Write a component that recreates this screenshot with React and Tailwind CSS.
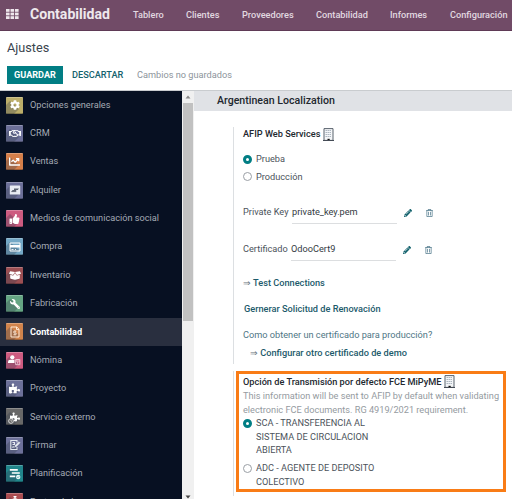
import React from "react";
import {
  FaCog, FaRegHandshake, FaChartLine, FaThumbsUp, FaWrench, FaBoxOpen,
  FaPuzzlePiece, FaPencilAlt, FaRegTrashAlt,
} from "react-icons/fa";

const Card = () => (
  <svg viewBox="0 0 12 12" className="h-3 w-3">
    <path d="M1 2h10v8H1z" fill="none" stroke="#fff" strokeWidth="1" />
    <path d="M1 4h10v2.6H1z" fill="#fff" />
    <path d="M2.5 8.5h2M6 8.5h1" stroke="#fff" strokeWidth=".9" />
  </svg>
);
const Rent = () => (
  <svg viewBox="0 0 12 12" className="h-3 w-3">
    <rect x=".8" y="1.5" width="10.4" height="9" rx=".6" fill="#e8ecf2" />
    <path d="M5 4.6h5L8.8 6H5zM2.4 7.8 3.6 6h3.6v1.6z" fill="#5b6270" />
    <path d="M2.4 7.6h4.8" stroke="#5b6270" strokeWidth=".8" />
  </svg>
);
const Invoice = () => (
  <svg viewBox="0 0 12 12" className="h-3 w-3" fill="none" stroke="#ffe9d3" strokeWidth="1">
    <path d="M2 1h5.8L10 3.2V11H2zM7.5 1v2.6H10" />
    <path d="M7.4 5.2H5.3q-.8 0-.8.9t.8.9h1.3q.8 0 .8.8t-.8.9H4.4M6 4.4v5" strokeWidth=".8" />
  </svg>
);
const Payroll = () => (
  <svg viewBox="0 0 13 12" className="h-3 w-[13px]">
    <circle cx="4.3" cy="3.3" r="2.1" fill="#fff" />
    <path d="M0 9V8q0-2.2 2.2-2.2h4.3V9z" fill="#fff" />
    <path d="M7.7 5.5h4.1v5.2H7.7zM7.7 7h4.1M9.7 7.8v2" fill="none" stroke="#f5cfdc" strokeWidth=".9" />
  </svg>
);
const Field = () => (
  <span className="relative flex">
    <FaPuzzlePiece className="ml-px h-[10px] w-[10px] text-white" />
    <svg viewBox="0 0 6 6" className="absolute -left-px top-[6px] h-[6px] w-[6px]">
      <circle cx="3" cy="3" r="2.4" fill="#686868" stroke="#eee" strokeWidth=".8" />
      <path d="M3 1.8V3l1 .5" fill="none" stroke="#eee" strokeWidth=".6" />
    </svg>
  </span>
);
const Sign = () => (
  <svg viewBox="0 0 12 12" className="h-3 w-3" fill="none" stroke="#e6eaf0" strokeWidth="1.1">
    <path d="M8 8v2.5H1.8v-9H8v2M3.5 3.5h2v2h-2M3.3 8.5q1-1.5 2 0" />
    <path d="m5.8 8 .6-1.7L10 2.8l1 1-3.5 3.6z" fill="#e6eaf0" strokeWidth=".5" />
  </svg>
);
const Plan = () => (
  <svg viewBox="0 0 12 12" className="h-3 w-3">
    <path d="M.8 1.8h8M2.8 5h8M.8 8.3h5.5" stroke="#fff" strokeWidth="1.7" />
    <circle cx="9.2" cy="9" r="2.2" fill="#e8f8f8" />
    <path d="m8.2 9 .8.8 1.3-1.5" fill="none" stroke="#21858b" strokeWidth=".6" />
  </svg>
);
const Stopwatch = () => (
  <svg viewBox="0 0 12 12" className="h-3 w-3">
    <path d="M4.5 0h3v1.2h-.8v1.2H5.3V1.2h-.8z" fill="#fff" />
    <circle cx="6" cy="6.8" r="4.6" fill="#fff" />
    <path d="M6 4v3.2" stroke="#a94c50" strokeWidth="1" />
  </svg>
);

const apps = [
  ["Opciones generales", "bg-[#bcae6a]", <FaCog className="h-[10px] w-[10px]" />],
  ["CRM", "bg-[#6c7099]", <FaRegHandshake className="h-[11px] w-[12px]" />],
  ["Ventas", "bg-[#d57f4a]", <FaChartLine className="h-[11px] w-[11px]" />],
  ["Alquiler", "bg-[#6c7099]", <Rent />],
  ["Medios de comunicación social", "bg-[#cd5b80]", <FaThumbsUp className="h-[10px] w-[11px]" />],
  ["Compra", "bg-[#74a8c6]", <Card />],
  ["Inventario", "bg-[#9c4f53]", <FaBoxOpen className="h-[11px] w-[12px]" />],
  ["Fabricación", "bg-[#65a583]", <FaWrench className="h-[10px] w-[10px] -scale-x-100" />],
  ["Contabilidad", "bg-[#d1844c]", <Invoice />],
  ["Nómina", "bg-[#cd5b80]", <Payroll />],
  ["Proyecto", "bg-[#6c7099]", <FaPuzzlePiece className="h-[11px] w-[11px]" />],
  ["Servicio externo", "bg-[#686868]", <Field />],
  ["Firmar", "bg-[#6c7099]", <Sign />],
  ["Planificación", "bg-[#21858b]", <Plan />],
  ["Partes de horas", "bg-[#a94c50]", <Stopwatch />],
];

function AppIcon({ color, children }) {
  return (
    <span className={`relative flex h-[17px] w-[17px] shrink-0 items-center justify-center overflow-hidden rounded-[1px] text-white ${color}`}>
      <svg viewBox="0 0 17 17" className="absolute inset-0 h-full w-full">
        <path d="M0 8 4 4l9 8-5 5H0z" fill="#303848" fillOpacity=".3" />
        <path d="M0 .5h17" stroke="#fff" strokeOpacity=".25" />
        <path d="M0 16.5h17" stroke="#000" strokeOpacity=".25" />
      </svg>
      <span className="relative flex">{children}</span>
    </span>
  );
}

function Building() {
  return (
    <svg viewBox="0 0 11 13" className="h-[13px] w-[11px] shrink-0">
      <path d="M1 .6h9v11.8H1z" fill="#f4f6f8" stroke="#59626d" strokeWidth="1" />
      <path d="M2.6 2.5h6M2.6 4.5h6M2.6 6.5h6M2.6 8.5h6" stroke="#9ba6b2" strokeWidth="1" strokeDasharray="1.2 .8" />
      <path d="M4.5 10.8h2.2v1.7H4.5z" fill="#111" />
      <path d="M0 12.5h11" stroke="#444b55" />
    </svg>
  );
}

function Radio({ checked }) {
  return checked ? (
    <span className="h-[9px] w-[9px] shrink-0 rounded-full border-[3px] border-[#017e84] bg-white" />
  ) : (
    <span className="h-[9px] w-[9px] shrink-0 rounded-full border border-[#9a9fa5] bg-white" />
  );
}

function FileRow({ label, value, gap }) {
  return (
    <div className="flex h-[22px] items-start leading-[19px] text-[#4c535b]">
      <span className={`whitespace-nowrap ${gap}`}>{label}</span>
      <span className="h-[22px] w-[105px] border-b border-[#dcdee0] text-[#343a42]">{value}</span>
      <FaPencilAlt className="ml-[7px] mt-[7px] h-2 w-2 text-[#10606b]" />
      <FaRegTrashAlt className="ml-[14px] mt-[7px] h-2 w-[7px] text-[#567e90]" />
    </div>
  );
}

export default function App() {
  return (
    <div className="flex h-[499px] w-[512px] flex-col overflow-hidden bg-white font-['Roboto',sans-serif]">
      <header className="flex h-[31px] shrink-0 items-center whitespace-nowrap border-b border-[#5f3a56] bg-[#714b67] text-[9.2px] font-medium text-[#e2d9e0]">
        <svg viewBox="0 0 13 10" className="ml-[6px] mt-[-2px] h-[10px] w-[13px] shrink-0" fill="#eee6ec">
          {[0, 3.6, 7.2].map((y) => [0, 4.5, 9].map((x) => <rect key={x + "-" + y} x={x} y={y} width="3.6" height="2.8" />))}
        </svg>
        <div className="mt-[-1px] ml-[11px] w-[103px] text-[14.1px] font-bold text-[#eee8ed]">Contabilidad</div>
        <div className="mt-[-1px] w-[53px]">Tablero</div>
        <div className="mt-[-1px] w-[56px]">Clientes</div>
        <div className="mt-[-1px] w-[74px]">Proveedores</div>
        <div className="mt-[-1px] w-[74px]">Contabilidad</div>
        <div className="mt-[-1px] w-[60px]">Informes</div>
        <div className="mt-[-1px]">Configuración</div>
      </header>

      <div className="flex h-[60px] shrink-0 flex-col border-b border-[#c9cccf] pl-[7px]">
        <div className="h-[35px] pt-[7px] text-[12.7px] leading-[20px] text-[#3b444e]">Ajustes</div>
        <div className="flex h-[18px] items-center whitespace-nowrap text-[9.2px] font-medium">
          <button className="h-[18px] w-[56px] bg-[#017e84] text-[9.1px] font-bold leading-[18px] text-white">GUARDAR</button>
          <button className="ml-[9px] w-[65px] text-left text-[#15626e]">DESCARTAR</button>
          <span className="font-normal text-[#8d949b]">Cambios no guardados</span>
        </div>
      </div>

      <div className="flex min-h-0 flex-1">
        <nav className="w-[182px] shrink-0 overflow-hidden bg-[#071022]">
          {apps.map(([name, color, icon]) => (
            <div
              key={name}
              className={`flex h-[28.35px] items-center whitespace-nowrap pl-[6px] text-[9.2px] ${
                name === "Contabilidad" ? "bg-[#292f3f] font-bold text-white" : "text-[#a4aab4]"
              }`}
            >
              <AppIcon color={color}>{icon}</AppIcon>
              <span className="ml-[7px] pb-px">{name}</span>
            </div>
          ))}
        </nav>
        <div className="flex w-[12px] shrink-0 flex-col items-center bg-[#f0f0f0]">
          <svg viewBox="0 0 12 12" className="h-3 w-3 shrink-0"><path d="m3.5 7.5 2.5-3 2.5 3z" fill="#888" /></svg>
          <div className="h-[218px] w-[10px] shrink-0 bg-[#c1c1c1]" />
          <svg viewBox="0 0 12 6" className="mt-auto h-[6px] w-3 shrink-0"><path d="m3.5 2.5 2.5 3 2.5-3z" fill="#444" /></svg>
        </div>

        <main className="min-w-0 flex-1 whitespace-nowrap text-[9.2px] text-[#4c535b]">
          <h2 className="h-5 bg-[#e0e2e6] pl-[23px] text-[10.6px] font-medium leading-[19px] text-[#22272e]">Argentinean Localization</h2>
          <section className="ml-[39px] mt-4 h-[237px] border-l border-[#dcdfe2] pl-[9px]">
            <div className="flex h-[14px] items-center gap-[3px] font-medium text-[#22272e]">
              <span>AFIP Web Services</span><Building />
            </div>
            <div className="mt-[9px] flex h-[18px] items-center gap-1"><Radio checked /><span>Prueba</span></div>
            <div className="flex h-[17px] items-center gap-1"><Radio /><span>Producción</span></div>
            <div className="mt-[17px]"><FileRow label="Private Key" value="private_key.pem" gap="w-[49px]" /></div>
            <div className="mt-[15px]"><FileRow label="Certificado" value="OdooCert9" gap="w-[48px]" /></div>
            <div className="mt-[13px] h-[18px] font-medium leading-[18px] text-[#1c5a6b]">
              <span className="text-[#66717a]">⇒</span> Test Connections
            </div>
            <div className="mt-[8px] h-[18px] pl-px font-medium leading-[18px] text-[#1c5a6b]">Gernerar Solicitud de Renovación</div>
            <div className="mt-[8px] h-[18px] leading-[18px] text-[#4f7685]">Como obtener un certificado para producción?</div>
            <div className="h-[17px] pl-[7px] font-medium leading-[17px] text-[#1c5a6b]">
              <span className="text-[#66717a]">⇒</span> Configurar otro certificado de demo
            </div>
          </section>
          <section className="ml-[39px] mt-[7px] h-[125px] border-l border-[#dcdfe2] pl-[2px]">
            <div className="h-[121px] w-[270px] border-[3px] border-[#f97c16] pl-[4px]">
              <div className="flex h-[15px] items-center gap-[3px] font-medium text-[#22272e]">
                <span>Opción de Transmisión por defecto FCE MiPyME</span><Building />
              </div>
              <div className="leading-[13.5px] text-[#959ba1]">
                This information will be sent to AFIP by default when validating
                <br />
                electronic FCE documents. RG 4919/2021 requirement.
              </div>
              <div className="flex gap-1 leading-[13.7px]">
                <span className="flex h-[14px] items-center"><Radio checked /></span>
                <span>SCA - TRANSFERENCIA AL<br />SISTEMA DE CIRCULACION<br />ABIERTA</span>
              </div>
              <div className="mt-[4px] flex gap-1 leading-[13.7px]">
                <span className="flex h-[14px] items-center"><Radio /></span>
                <span>ADC - AGENTE DE DEPOSITO<br />COLECTIVO</span>
              </div>
            </div>
          </section>
        </main>
      </div>
    </div>
  );
}
